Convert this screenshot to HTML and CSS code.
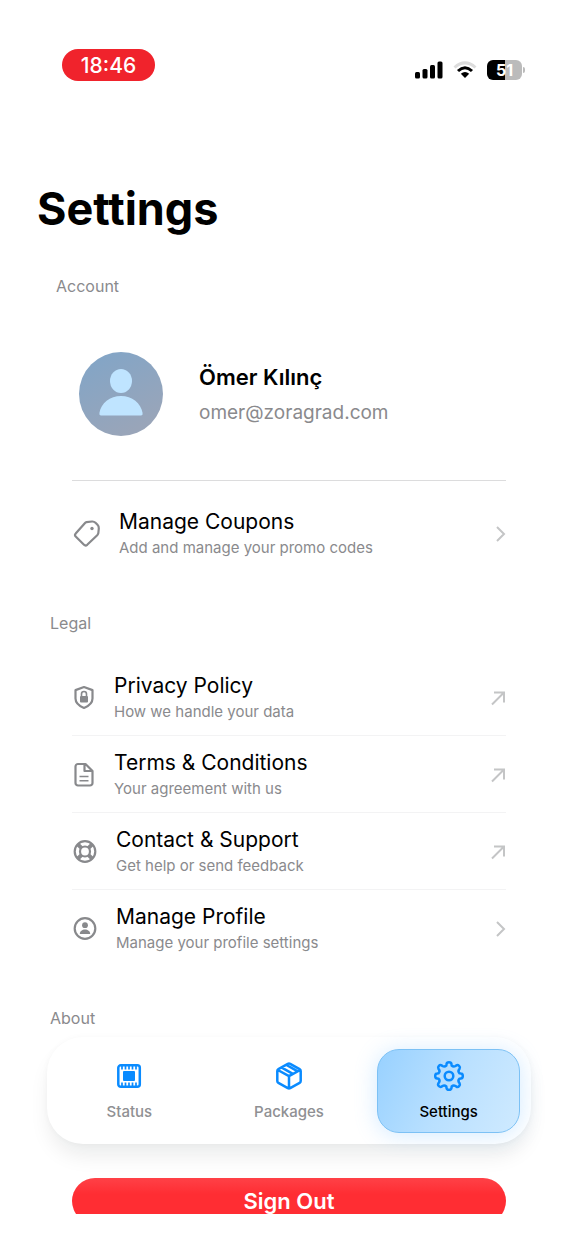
FILE: index.html
```
<!DOCTYPE html>
<html lang="en">
<head>
<meta charset="utf-8">
<meta name="viewport" content="width=device-width, initial-scale=1">
<title>Settings</title>
<link rel="stylesheet" href="styles.css">
</head>
<body>
<div class="app">
  <main class="screen">
    <header class="status-bar">
      <time class="clock">18:46</time>
      <div class="indicators">
        <svg width="28" height="18" viewBox="0 0 28 18" aria-label="Signal"><rect x="0" y="11" width="5" height="6.500" rx="1.500"/><rect x="7.500" y="8" width="5" height="9.500" rx="1.500"/><rect x="15" y="4" width="5" height="13.500" rx="1.500"/><rect x="22.500" y="0.500" width="5" height="17" rx="1.500"/></svg>
        <svg width="24" height="18" viewBox="0 0 24 18" aria-label="Wi-Fi" fill="none" stroke-width="3"><path d="M1.500 6.500Q12-2.800 22.500 6.500" stroke="#dcdcdc"/><path d="M5 10Q12 3.500 19 10" stroke="#000"/><path d="M12 17 7.800 12.800Q12 9.200 16.200 12.800Z" fill="#000"/></svg>
        <div class="battery"><span class="battery-level">51</span></div>
      </div>
    </header>

    <h1 class="title">Settings</h1>

    <h2 class="section-title section-title-inset">Account</h2>
    <section class="group">
      <div class="profile">
        <svg class="avatar" viewBox="0 0 84 84" aria-hidden="true">
          <defs><linearGradient id="av" x1="0" y1="0" x2="0.500" y2="1"><stop stop-color="#80a5c8"/><stop offset="1" stop-color="#99a5b9"/></linearGradient></defs>
          <circle cx="42" cy="42" r="42" fill="url(#av)"/>
          <ellipse cx="42" cy="29" rx="11" ry="12" fill="#bfe4ff"/>
          <path d="M22 63.500Q20 63.500 20.400 61C22 51 31 44 42 44S62 51 63.600 61Q64 63.500 62 63.500Z" fill="#bfe4ff"/>
        </svg>
        <div class="profile-text">
          <strong class="name">Ömer Kılınç</strong>
          <span class="email">omer@zoragrad.com</span>
        </div>
      </div>
      <a class="row row-coupons" href="#coupons">
        <svg class="icon icon-large" viewBox="0 0 29 30"><path d="M14.500 3.200 20 2.500Q22 2.300 23.500 3.800L25.500 5.800Q27 7.300 26.800 9.500L26.300 14.300Q26 15.500 25.200 16.300L15.200 25.800Q13.500 27.200 12 25.700L3.700 17.500Q2.300 16 3.700 14.500L12.800 4.200Q13.500 3.400 14.500 3.200Z"/><circle cx="20" cy="9.500" r="1.700" class="solid"/></svg>
        <span class="row-text"><span class="row-title">Manage Coupons</span><span class="row-note">Add and manage your promo codes</span></span>
        <svg class="arrow" viewBox="0 0 16 16"><path d="m7 1 7 7-7 7"/></svg>
      </a>
    </section>

    <h2 class="section-title">Legal</h2>
    <section class="group">
      <a class="row" href="#privacy">
        <svg class="icon" viewBox="0 0 24 26"><path d="M12 2 20.500 5.100V13.500Q20.500 19.500 12 23 3.500 19.500 3.500 13.500V5.100Z"/><path d="M9.500 11.500V9a2.500 2.500 0 0 1 5 0V11.500" stroke-width="1.600"/><rect x="8" y="11" width="8" height="6.500" rx="1" class="solid"/></svg>
        <span class="row-text"><span class="row-title">Privacy Policy</span><span class="row-note">How we handle your data</span></span>
        <svg class="arrow" viewBox="0 0 16 16"><path d="M4 2.500h10v10M14 2.500 2 14.500"/></svg>
      </a>
      <a class="row" href="#terms">
        <svg class="icon" viewBox="0 0 24 26"><path d="M6 2h7.500l7 7V21a2.500 2.500 0 0 1-2.500 2.500H6a2.500 2.500 0 0 1-2.500-2.500V4.500A2.500 2.500 0 0 1 6 2ZM12.500 2V9h8"/><path d="M7.500 14.500h9M7.500 18.700h9" stroke-width="1.500"/></svg>
        <span class="row-text"><span class="row-title">Terms &amp; Conditions</span><span class="row-note">Your agreement with us</span></span>
        <svg class="arrow" viewBox="0 0 16 16"><path d="M4 2.500h10v10M14 2.500 2 14.500"/></svg>
      </a>
      <a class="row" href="#support">
        <svg class="icon icon-medium" viewBox="0 0 26 26"><circle cx="13" cy="12.500" r="10.300"/><circle cx="13" cy="12.500" r="5"/><path d="m5.800 5.300 3.600 3.600M20.200 5.300l-3.600 3.600M5.800 19.700l3.600-3.600M20.200 19.700l-3.600-3.600" stroke-width="4"/></svg>
        <span class="row-text"><span class="row-title">Contact &amp; Support</span><span class="row-note">Get help or send feedback</span></span>
        <svg class="arrow" viewBox="0 0 16 16"><path d="M4 2.500h10v10M14 2.500 2 14.500"/></svg>
      </a>
      <a class="row" href="#profile">
        <svg class="icon icon-medium" viewBox="0 0 26 26"><circle cx="13" cy="12.500" r="10.300"/><circle cx="13" cy="9.200" r="2.900" class="solid"/><path class="solid" d="M7.800 18C7.800 12 18.200 12 18.200 18Z"/></svg>
        <span class="row-text"><span class="row-title">Manage Profile</span><span class="row-note">Manage your profile settings</span></span>
        <svg class="arrow" viewBox="0 0 16 16"><path d="m7 1 7 7-7 7"/></svg>
      </a>
    </section>

    <h2 class="section-title">About</h2>
    <button class="sign-out" type="button">Sign Out</button>
  </main>

  <nav class="tabs" aria-label="Main">
    <a class="tab" href="#status">
      <svg viewBox="0 0 32 32"><rect x="5.300" y="5.300" width="21.500" height="21.500" rx="2.500"/><rect x="10" y="11" width="12" height="10" rx="1" class="solid"/><path stroke-width="1.700" d="M9 6v3.500M12.500 6v3.500M16 6v3.500M19.500 6v3.500M23 6v3.500M9 26v-3.500M12.500 26v-3.500M16 26v-3.500M19.500 26v-3.500M23 26v-3.500"/></svg>
      <span>Status</span>
    </a>
    <a class="tab" href="#packages">
      <svg viewBox="0 0 32 32"><path d="M14.800 3.900 5.400 9.100Q4.300 9.700 4.300 11V21Q4.300 22.300 5.400 22.900L14.800 28.100Q16 28.700 17.200 28.100L26.600 22.900Q27.700 22.300 27.700 21V11Q27.700 9.700 26.600 9.100L17.200 3.900Q16 3.300 14.800 3.900ZM4.800 10 16 16.200 27.200 10M16 16.200V28M8.800 7.700 19.800 13.800M13.500 5 24.300 11.100"/></svg>
      <span>Packages</span>
    </a>
    <a class="tab tab-active" href="#settings" aria-current="page">
      <svg viewBox="0 0 32 32"><circle cx="16" cy="16" r="4.300"/><path d="M13.500 4.200Q13.700 2.200 16 2.200T18.500 4.200L18.700 5.500Q20.500 7.300 22.500 6L23.300 5.400Q24.700 4.600 26.100 5.900T26.600 8.700L26 9.500Q24.700 11.500 26.500 13.300L27.800 13.500Q29.800 13.700 29.800 16T27.800 18.500L26.500 18.700Q24.700 20.500 26 22.500L26.600 23.300Q27.400 24.700 26.100 26.100T23.300 26.600L22.500 26Q20.500 24.700 18.700 26.500L18.500 27.800Q18.300 29.800 16 29.800T13.500 27.800L13.300 26.500Q11.500 24.700 9.500 26L8.700 26.600Q7.300 27.400 5.900 26.100T5.400 23.300L6 22.500Q7.300 20.500 5.500 18.700L4.200 18.500Q2.200 18.300 2.200 16T4.200 13.500L5.500 13.300Q7.300 11.500 6 9.500L5.400 8.700Q4.600 7.300 5.900 5.900T8.700 5.400L9.500 6Q11.500 7.300 13.300 5.500Z"/></svg>
      <span>Settings</span>
    </a>
  </nav>
</div>
</body>
</html>
```

FILE: styles.css
```
* { box-sizing: border-box; }
body {
  margin: 0;
  background: #fff;
  color: #000;
  font-family: Inter, "Liberation Sans", sans-serif;
}
a { color: inherit; text-decoration: none; }
.app {
  position: relative;
  height: 100vh;
  padding-bottom: 24px;
}
.screen {
  display: flex;
  flex-direction: column;
  height: 100%;
  padding: 49px 66px 0 72px;
  overflow: hidden;
}
.screen > * { flex-shrink: 0; }

.status-bar {
  display: flex;
  align-items: center;
  justify-content: space-between;
  margin: 0 -20px 0 -10px;
}
.clock {
  width: 93px;
  padding-top: 2px;
  border-radius: 16px;
  background: #f0232c;
  color: #fff;
  font-size: 21px;
  font-weight: 500;
  line-height: 30px;
  text-align: center;
}
.indicators {
  display: flex;
  align-items: center;
  gap: 10px;
  padding-top: 10px;
}
.battery {
  position: relative;
  width: 35px;
  border-radius: 6px;
  background: linear-gradient(90deg, #000 51%, #bbb 51%);
  color: #fff;
  font-size: 16px;
  font-weight: 700;
  line-height: 20px;
  text-align: center;
  margin-right: 4px;
}
.battery::after {
  content: "";
  position: absolute;
  top: 7px;
  right: -3px;
  width: 2px;
  height: 6px;
  border-radius: 0 2px 2px 0;
  background: #bbb;
}

.title {
  margin: 100px 0 39px -35px;
  font-size: 45px;
  font-weight: 700;
  line-height: 56px;
}
.section-title {
  margin: 42px 0 26px -22px;
  color: #8a8a8d;
  font-size: 16px;
  font-weight: 400;
  line-height: 20px;
}
.section-title-inset { margin: 0 0 0 -16px; }

.profile {
  display: flex;
  align-items: center;
  gap: 36px;
  padding: 56px 7px 44px;
  border-bottom: 1px solid #dcdcdd;
}
.avatar { width: 84px; height: 84px; }
.profile-text { display: flex; flex-direction: column; gap: 8px; padding-top: 1px; }
.name { font-size: 22px; font-weight: 600; line-height: 28px; }
.email { color: #8a8a8d; font-size: 19px; line-height: 28px; }

.row {
  display: flex;
  align-items: center;
  gap: 18px;
  padding: 13px 0 12px;
}
.row-coupons { margin-top: 14px; }
.row + .row { border-top: 1px solid #f3f3f4; }
.row-text { display: flex; flex: 1; flex-direction: column; gap: 1px; }
.row-title { font-size: 21px; line-height: 28px; }
.row-note { color: #8a8a8d; font-size: 15px; line-height: 22px; }
.icon {
  width: 24px;
  height: 26px;
  fill: none;
  stroke: #88898c;
  stroke-width: 2.2;
  stroke-linejoin: round;
}
.icon .solid { fill: #88898c; stroke: none; }
.icon-medium { width: 26px; }
.icon-large { width: 29px; height: 30px; }
.arrow {
  width: 16px;
  height: 16px;
  fill: none;
  stroke: #c4c5c6;
  stroke-width: 2;
}

.sign-out {
  height: 46px;
  margin-top: 124px;
  border: 0;
  border-radius: 23px;
  background: linear-gradient(#ff4147, #ff2d33 35%);
  color: #fff;
  font: 600 22px/28px Inter, "Liberation Sans", sans-serif;
}

.tabs {
  position: absolute;
  right: 41px;
  bottom: 94px;
  left: 47px;
  display: grid;
  grid-template-columns: repeat(3, 1fr);
  gap: 17px;
  padding: 12px 11px 11px;
  border-radius: 36px;
  background: #fff;
  box-shadow: 0 0 6px rgba(0, 30, 40, 0.03), 0 14px 22px -4px rgba(0, 20, 20, 0.09);
}
.tab {
  display: flex;
  flex-direction: column;
  align-items: center;
  gap: 10px;
  padding: 10px 0;
  border: 1px solid transparent;
  border-radius: 22px;
  color: #8f9093;
  font-size: 15px;
  font-weight: 500;
  line-height: 20px;
}
.tab svg {
  width: 32px;
  height: 32px;
  fill: none;
  stroke: #0a8bff;
  stroke-width: 2.5;
  stroke-linejoin: round;
}
.tab .solid { fill: #0a8bff; stroke: none; }
.tab-active {
  border-color: #7cc1f5;
  background: linear-gradient(115deg, #98d1ff, #b9e0ff 50%, #cfeaff);
  box-shadow: 0 2px 22px rgba(110, 185, 255, 0.3);
  color: #000;
}
```
